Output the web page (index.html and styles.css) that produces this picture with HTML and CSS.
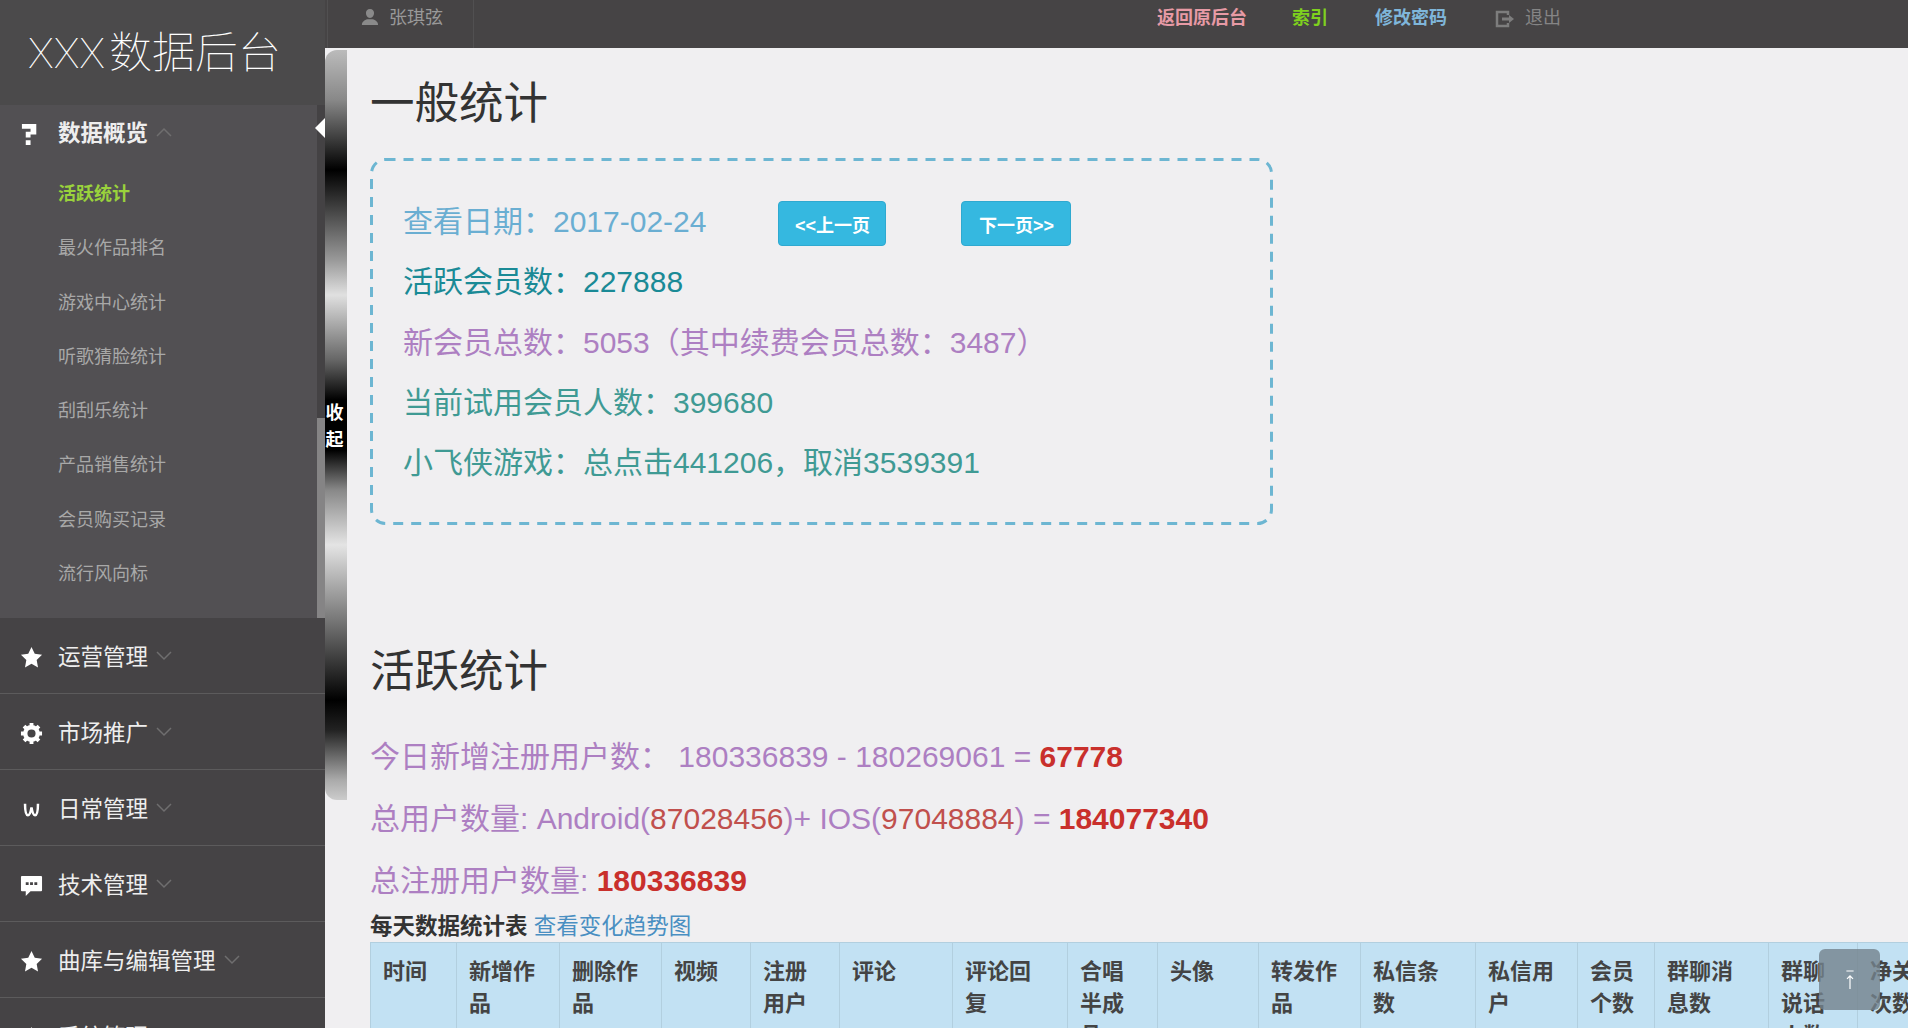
FILE: index.html
```html
<!DOCTYPE html>
<html lang="zh-CN">
<head>
    <meta charset="UTF-8">
    <title>XXX数据后台</title>
    <link rel="stylesheet" href="styles.css">
</head>
<body>
    <aside class="sidebar">
        <div class="logo"><span class="logo-x">XXX</span>数据后台</div>

        <div class="group open">
            <div class="group-head">
                <svg class="icon" viewBox="0 0 24 24"><path fill="#fff" d="M2 1h15v11h-6v3H6V9h5V6H2zM6 18h5v5H6z"/></svg>
                <span class="group-name">数据概览</span>
                <svg class="caret" viewBox="0 0 16 10"><path d="M1 9l7-7 7 7"/></svg>
            </div>
            <span class="arrow"></span>
            <ul class="sub">
                <li class="active">活跃统计</li>
                <li>最火作品排名</li>
                <li>游戏中心统计</li>
                <li>听歌猜脸统计</li>
                <li>刮刮乐统计</li>
                <li>产品销售统计</li>
                <li>会员购买记录</li>
                <li>流行风向标</li>
            </ul>
        </div>

        <div class="group">
            <div class="group-head">
                <svg class="icon" viewBox="0 0 24 24"><path fill="#fff" d="M12 1l3.4 7.2 7.6 1-5.600 5.400 1.400 7.800L12 18.600l-6.800 3.800 1.400-7.800L1 9.200l7.600-1z"/></svg>
                <span class="group-name">运营管理</span>
                <svg class="caret" viewBox="0 0 16 10"><path d="M1 1l7 7 7-7"/></svg>
            </div>
        </div>
        <div class="group">
            <div class="group-head">
                <svg class="icon" viewBox="0 0 24 24">
                    <circle cx="12" cy="12" r="6.500" fill="none" stroke="#fff" stroke-width="4.500"/>
                    <path fill="none" stroke="#fff" stroke-width="4" d="M12 1v22M1 12h22M4.200 4.200l15.600 15.600M19.800 4.200L4.200 19.800" stroke-dasharray="5 12 5"/>
                </svg>
                <span class="group-name">市场推广</span>
                <svg class="caret" viewBox="0 0 16 10"><path d="M1 1l7 7 7-7"/></svg>
            </div>
        </div>
        <div class="group">
            <div class="group-head">
                <svg class="icon icon-small" viewBox="0 0 24 24"><path fill="none" stroke="#fff" stroke-width="3.500" d="M3 4c0 10 1 16 4 16s4-5 5-11c1 6 2 11 5 11s4-6 4-16"/></svg>
                <span class="group-name">日常管理</span>
                <svg class="caret" viewBox="0 0 16 10"><path d="M1 1l7 7 7-7"/></svg>
            </div>
        </div>
        <div class="group">
            <div class="group-head">
                <svg class="icon" viewBox="0 0 24 24"><path fill="#fff" fill-rule="evenodd" d="M2 2h20q1 0 1 1v14q0 1-1 1H11l-5 5v-5H2q-1 0-1-1V3q0-1 1-1zM6 8.500v3h3v-3zm4.500 0v3h3v-3zm4.500 0v3h3v-3z"/></svg>
                <span class="group-name">技术管理</span>
                <svg class="caret" viewBox="0 0 16 10"><path d="M1 1l7 7 7-7"/></svg>
            </div>
        </div>
        <div class="group">
            <div class="group-head">
                <svg class="icon" viewBox="0 0 24 24"><path fill="#fff" d="M12 1l3.4 7.2 7.6 1-5.600 5.400 1.400 7.800L12 18.600l-6.800 3.800 1.400-7.800L1 9.200l7.600-1z"/></svg>
                <span class="group-name">曲库与编辑管理</span>
                <svg class="caret" viewBox="0 0 16 10"><path d="M1 1l7 7 7-7"/></svg>
            </div>
        </div>
        <div class="group">
            <div class="group-head">
                <svg class="icon" viewBox="0 0 24 24"><path fill="#fff" d="M12 1l3.4 7.2 7.6 1-5.600 5.400 1.400 7.800L12 18.600l-6.800 3.800 1.400-7.800L1 9.200l7.600-1z"/></svg>
                <span class="group-name">系统管理</span>
            </div>
        </div>
    </aside>

    <div class="right">
        <header class="topbar">
            <div class="user">
                <svg class="user-icon" viewBox="0 0 20 20"><path fill="#8a8a8a" d="M10 1c3 0 4.500 2 4.500 4.500S13 11 10 11 5.500 8 5.500 5.500 7 1 10 1zM1 19c0-4 3-5.500 6-6.500h6c3 1 6 2.500 6 6.500z"/></svg>
                <span>张琪弦</span>
            </div>
            <nav class="nav">
                <a class="nav-back">返回原后台</a>
                <a class="nav-index">索引</a>
                <a class="nav-pwd">修改密码</a>
                <a class="nav-exit">
                    <svg class="exit-icon" viewBox="0 0 20 18"><path fill="none" stroke="#7d7d7d" stroke-width="2.500" d="M13 5V2H2v14h11v-3"/><path fill="#7d7d7d" d="M7 7.500h7V5l5 4-5 4v-2.500H7z"/></svg>
                    退出
                </a>
            </nav>
        </header>

        <div class="body-wrap">
            <div class="collapse"><span>收</span><span>起</span></div>

            <main class="content">
                <h1>一般统计</h1>
                <div class="stat-box">
                    <svg class="dash"><rect class="dash-rect" x="1.500" y="1.500" rx="14"/></svg>
                    <div class="line date-line">
                        <span class="c-blue">查看日期：2017-02-24</span>
                        <button class="btn btn-prev">&lt;&lt;上一页</button>
                        <button class="btn btn-next">下一页&gt;&gt;</button>
                    </div>
                    <div class="line c-teal">活跃会员数：227888</div>
                    <div class="line c-purple">新会员总数：5053（其中续费会员总数：3487）</div>
                    <div class="line c-green">当前试用会员人数：399680</div>
                    <div class="line c-green">小飞侠游戏：总点击441206，取消3539391</div>
                </div>

                <h1 class="h-second">活跃统计</h1>
                <div class="line c-purple">今日新增注册用户数： 180336839 - 180269061 = <b class="red">67778</b></div>
                <div class="line c-purple">总用户数量: Android(<span class="red-thin">87028456</span>)+ IOS(<span class="red-thin">97048884</span>) = <b class="red">184077340</b></div>
                <div class="line c-purple">总注册用户数量: <b class="red">180336839</b></div>

                <div class="table-title">每天数据统计表 <a>查看变化趋势图</a></div>
                <table class="day-table">
                    <colgroup>
                        <col><col><col><col><col><col><col><col>
                        <col><col><col><col><col><col><col><col>
                    </colgroup>
                    <thead>
                        <tr>
                            <th>时间</th>
                            <th>新增作品</th>
                            <th>删除作品</th>
                            <th>视频</th>
                            <th>注册用户</th>
                            <th>评论</th>
                            <th>评论回复</th>
                            <th>合唱半成品</th>
                            <th>头像</th>
                            <th>转发作品</th>
                            <th>私信条数</th>
                            <th>私信用户</th>
                            <th>会员个数</th>
                            <th>群聊消息数</th>
                            <th>群聊说话人数</th>
                            <th>净关次数</th>
                        </tr>
                    </thead>
                </table>
            </main>
        </div>
    </div>

    <div class="to-top">
        <svg viewBox="0 0 20 34"><path fill="none" stroke="#fff" stroke-width="2" d="M4 2h12M10 32V10M5 15l5-5 5 5"/></svg>
    </div>
</body>
</html>
```

FILE: styles.css
```css
html, body {
    margin: 0;
    height: 100%;
    overflow: hidden;
}
body {
    display: flex;
    font-family: "Liberation Sans", "Noto Sans CJK SC", sans-serif;
    background-color: #f0eff1;
    color: #333;
}

/* sidebar */
.sidebar {
    width: 325px;
    flex-shrink: 0;
    height: 100vh;
    overflow: hidden;
    background-color: #454345;
    color: #eee;
}
.logo {
    height: 105px;
    box-sizing: border-box;
    padding: 24px 0 0 28px;
    background-color: #4b4a4b;
    color: #fff;
    font-family: Roboto, "Noto Sans CJK SC", sans-serif;
    font-size: 43px;
    font-weight: 100;
    line-height: 58px;
    white-space: nowrap;
}
.logo-x {
    margin-right: 4px;
}
.group {
    position: relative;
    border-bottom: 1px solid #5c5b5c;
}
.group.open {
    height: 513px;
    background-color: #525053;
    border-bottom: none;
    border-right: 8px solid #444244;
    box-sizing: border-box;
}
.group-head {
    display: flex;
    align-items: center;
    height: 75px;
    padding-left: 20px;
    font-size: 22.500px;
}
.group.open .group-head {
    height: 54px;
    font-weight: bold;
}
.icon {
    width: 23px;
    height: 23px;
    margin: 4px 15px 0 0;
    flex-shrink: 0;
}
.icon-small {
    transform: scale(0.75);
}
.group-name {
    margin-bottom: 2px;
}
.caret {
    width: 16px;
    height: 10px;
    margin-left: 8px;
    fill: none;
    stroke: #6f6e6f;
    stroke-width: 1.500;
}
.arrow {
    position: absolute;
    right: -8px;
    top: 13px;
    border-top: 10px solid transparent;
    border-bottom: 10px solid transparent;
    border-right: 10px solid #fff;
}
.sub {
    list-style: none;
    margin: 8px 0 0;
    padding: 0 0 0 58px;
}
.sub li {
    height: 54.300px;
    line-height: 54.300px;
    font-size: 18px;
    color: #a8a8a8;
}
.sub li.active {
    color: #9ad23c;
    font-weight: bold;
}
.group.open::after {
    content: "";
    position: absolute;
    right: -8px;
    bottom: 0;
    width: 8px;
    height: 200px;
    background-color: #858485;
}

/* top bar */
.right {
    flex: 1;
    min-width: 0;
    height: 100vh;
    display: flex;
    flex-direction: column;
}
.topbar {
    height: 48px;
    flex-shrink: 0;
    display: flex;
    align-items: flex-start;
    background-color: #464445;
    font-size: 18px;
}
.user {
    width: 147px;
    height: 48px;
    margin-left: 2px;
    box-sizing: border-box;
    padding-left: 33px;
    display: flex;
    align-items: flex-start;
    line-height: 36px;
    color: #999;
    border-left: 1px solid #515051;
    border-right: 1px solid #515051;
}
.user-icon {
    width: 18px;
    height: 18px;
    margin: 8px 10px 0 0;
}
.nav {
    display: flex;
    line-height: 36px;
    font-weight: bold;
    margin-left: 683px;
}
.nav a {
    display: flex;
    white-space: nowrap;
}
.nav-back {
    color: #e79aa5;
    margin-right: 45px;
}
.nav-index {
    color: #7fd01e;
    margin-right: 47px;
}
.nav-pwd {
    color: #7fb6da;
    margin-right: 48px;
}
.nav-exit {
    color: #858585;
    font-weight: normal;
}
.exit-icon {
    width: 20px;
    height: 18px;
    margin: 10px 10px 0 0;
}

/* collapse strip */
.body-wrap {
    flex: 1;
    min-height: 0;
    display: flex;
}
.collapse {
    width: 22px;
    height: 750px;
    margin-top: 2px;
    flex-shrink: 0;
    box-sizing: border-box;
    padding: 350px 3px 0 0;
    display: flex;
    flex-direction: column;
    align-items: center;
    border-radius: 12px 0 0 12px;
    background: linear-gradient(#bbb 0, #888 50px, #000 120px, #333 150px, #999 210px, #e0e0e0 245px, #666 310px, #000 350px, #000 400px, #888 440px, #e4e4e4 495px, #777 570px, #000 650px, #222 680px, #aaa 730px, #ccc 750px);
    color: #fff;
    font-size: 18px;
    font-weight: bold;
    line-height: 27px;
}

/* content */
.content {
    flex: 1;
    min-width: 0;
    padding: 0 0 0 23px;
}
h1 {
    margin: 28px 0 0;
    font-size: 44.500px;
    font-weight: normal;
    line-height: 56px;
    color: #333;
}
.h-second {
    margin: 119px 0 26px;
}
.stat-box {
    position: relative;
    width: 903px;
    height: 367px;
    margin-top: 26px;
    box-sizing: border-box;
    padding: 34px 0 0 33px;
}
.dash {
    position: absolute;
    left: 0;
    top: 0;
    width: 100%;
    height: 100%;
}
.dash-rect {
    width: calc(100% - 3px);
    height: calc(100% - 3px);
    fill: none;
    stroke: #6db6d2;
    stroke-width: 3;
    stroke-dasharray: 10 8;
}
.line {
    height: 62px;
    line-height: 62px;
    font-size: 30px;
    white-space: nowrap;
}
.stat-box .line {
    height: 60.300px;
    line-height: 60.300px;
}
.date-line {
    display: flex;
    align-items: center;
}
.c-blue {
    color: #6aaed2;
}
.c-teal {
    color: #1a8a96;
}
.c-purple {
    color: #ad7fc2;
}
.c-green {
    color: #3f9a94;
}
.red {
    color: #c9302c;
}
.red-thin {
    color: #c0504d;
}
.btn {
    position: relative;
    height: 45px;
    margin-top: 3px;
    padding: 0;
    border: 1px solid #2fa9d0;
    border-radius: 4px;
    background-color: #35b8e0;
    color: #fff;
    font-family: inherit;
    font-size: 18px;
    font-weight: bold;
}
.btn-prev {
    width: 108px;
    margin-left: 72px;
}
.btn-next {
    width: 110px;
    margin-left: 75px;
}
.table-title {
    margin-top: -1px;
    height: 31px;
    line-height: 31px;
    font-size: 22.500px;
    font-weight: bold;
    color: #333;
}
.table-title a {
    color: #4a8fc2;
    font-weight: normal;
}

/* table runs past the right edge */
.day-table {
    table-layout: fixed;
    width: 1570px;
    border-collapse: collapse;
    background-color: #c2e1f3;
}
.day-table th {
    height: 180px;
    box-sizing: border-box;
    padding: 13px 18px 13px 12px;
    text-align: left;
    vertical-align: top;
    border: 1px solid #b2cfdf;
    font-size: 22px;
    font-weight: bold;
    line-height: 32px;
    color: #444;
}
.day-table col:nth-child(1) { width: 86px; }
.day-table col:nth-child(2) { width: 103px; }
.day-table col:nth-child(3) { width: 102px; }
.day-table col:nth-child(4) { width: 89px; }
.day-table col:nth-child(5) { width: 89px; }
.day-table col:nth-child(6) { width: 113px; }
.day-table col:nth-child(7) { width: 115px; }
.day-table col:nth-child(8) { width: 90px; }
.day-table col:nth-child(9) { width: 101px; }
.day-table col:nth-child(10) { width: 102px; }
.day-table col:nth-child(11) { width: 115px; }
.day-table col:nth-child(12) { width: 102px; }
.day-table col:nth-child(13) { width: 77px; }
.day-table col:nth-child(14) { width: 114px; }
.day-table col:nth-child(15) { width: 89px; }
.day-table col:nth-child(16) { width: 83px; }

/* back to top */
.to-top {
    position: fixed;
    left: 1819px;
    top: 949px;
    width: 61px;
    height: 61px;
    display: flex;
    align-items: center;
    justify-content: center;
    border-radius: 6px;
    background-color: rgba(115, 130, 140, 0.8);
}
.to-top svg {
    width: 12px;
    height: 34px;
}
```
